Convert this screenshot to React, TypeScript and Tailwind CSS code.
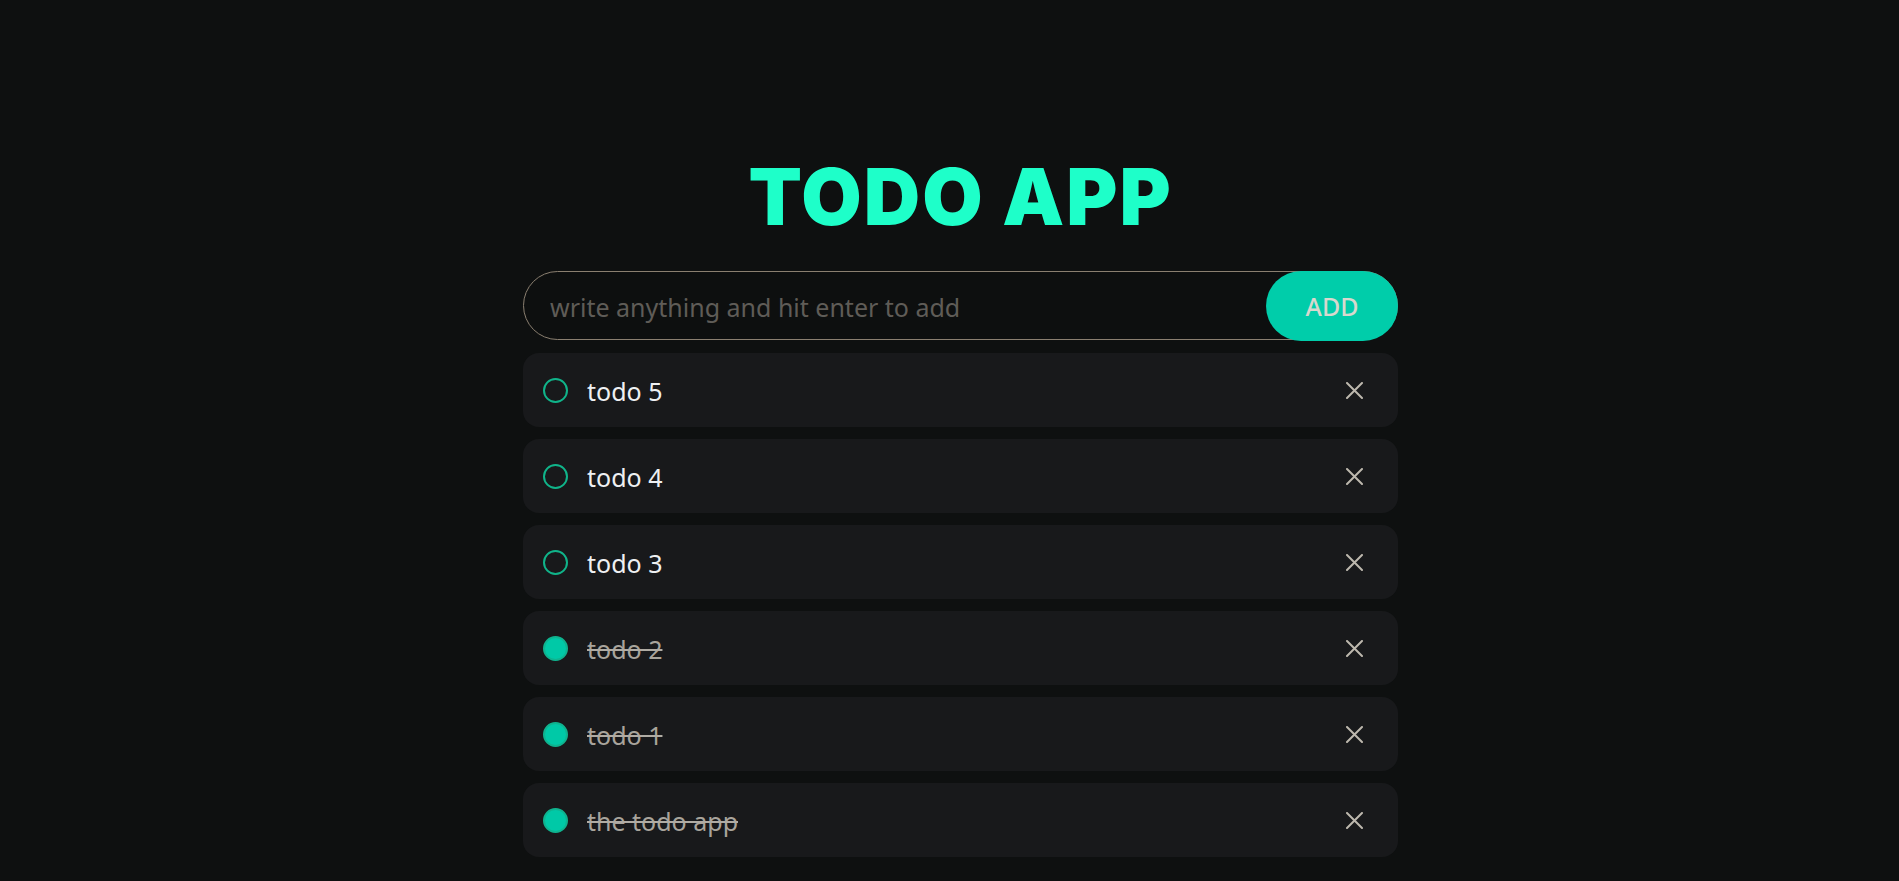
import React from "react";

const todos = [
  { text: "todo 5", done: false },
  { text: "todo 4", done: false },
  { text: "todo 3", done: false },
  { text: "todo 2", done: true },
  { text: "todo 1", done: true },
  { text: "the todo app", done: true },
];

export default function App() {
  return (
    <div
      className="min-h-screen bg-[#0e1010] pl-[22px]"
      style={{ fontFamily: '"Noto Sans", "Open Sans", sans-serif' }}
    >
      <div className="mx-auto w-[875px] pt-[158px]">
        <h1
          className="text-center text-[78px] leading-none font-black tracking-[2px] text-[#1effc9]"
          style={{ fontFamily: 'Inter, "DejaVu Sans", sans-serif' }}
        >
          TODO APP
        </h1>
        <div className="relative mt-[35px] h-[69px]">
          <input
            className="h-full w-full rounded-full border-[1.5px] border-[#8a7f70] bg-[#0d0f0f] pl-[26px] pr-[150px] pt-[2px] text-[25px] text-[#e0e0e0] outline-none placeholder:text-[#5f5c57]"
            placeholder="write anything and hit enter to add"
          />
          <button className="absolute right-0 top-0 flex h-[70px] w-[132px] items-center justify-center rounded-full bg-[#00cdaa] pt-[2px] text-[25px] font-medium text-[#d8d8ce]">
            ADD
          </button>
        </div>
        <div className="mt-[13px] flex flex-col gap-[12px]">
          {todos.map((t) => (
            <div
              key={t.text}
              className="flex h-[74px] items-center rounded-[16px] bg-[#18191b] pl-[20px] pr-[35px]"
            >
              {t.done ? (
                <span className="h-[25px] w-[25px] shrink-0 rounded-full border-2 border-[#0fb38f] bg-[#00c9a7]" />
              ) : (
                <span className="h-[25px] w-[25px] shrink-0 rounded-full border-2 border-[#10b48a]" />
              )}
              <span
                className={
                  t.done
                    ? "ml-[19px] flex-1 pt-[3px] text-[25px] text-[#a8a49c] line-through decoration-[#b0aca4] decoration-2"
                    : "ml-[19px] flex-1 pt-[3px] text-[25px] text-[#eef0f2]"
                }
              >
                {t.text}
              </span>
              <svg width="17" height="17" viewBox="0 0 17 17" className="shrink-0">
                <path d="M1 1 L16 16 M16 1 L1 16" stroke="#bdb8ae" strokeWidth="2" strokeLinecap="round" />
              </svg>
            </div>
          ))}
        </div>
      </div>
    </div>
  );
}
